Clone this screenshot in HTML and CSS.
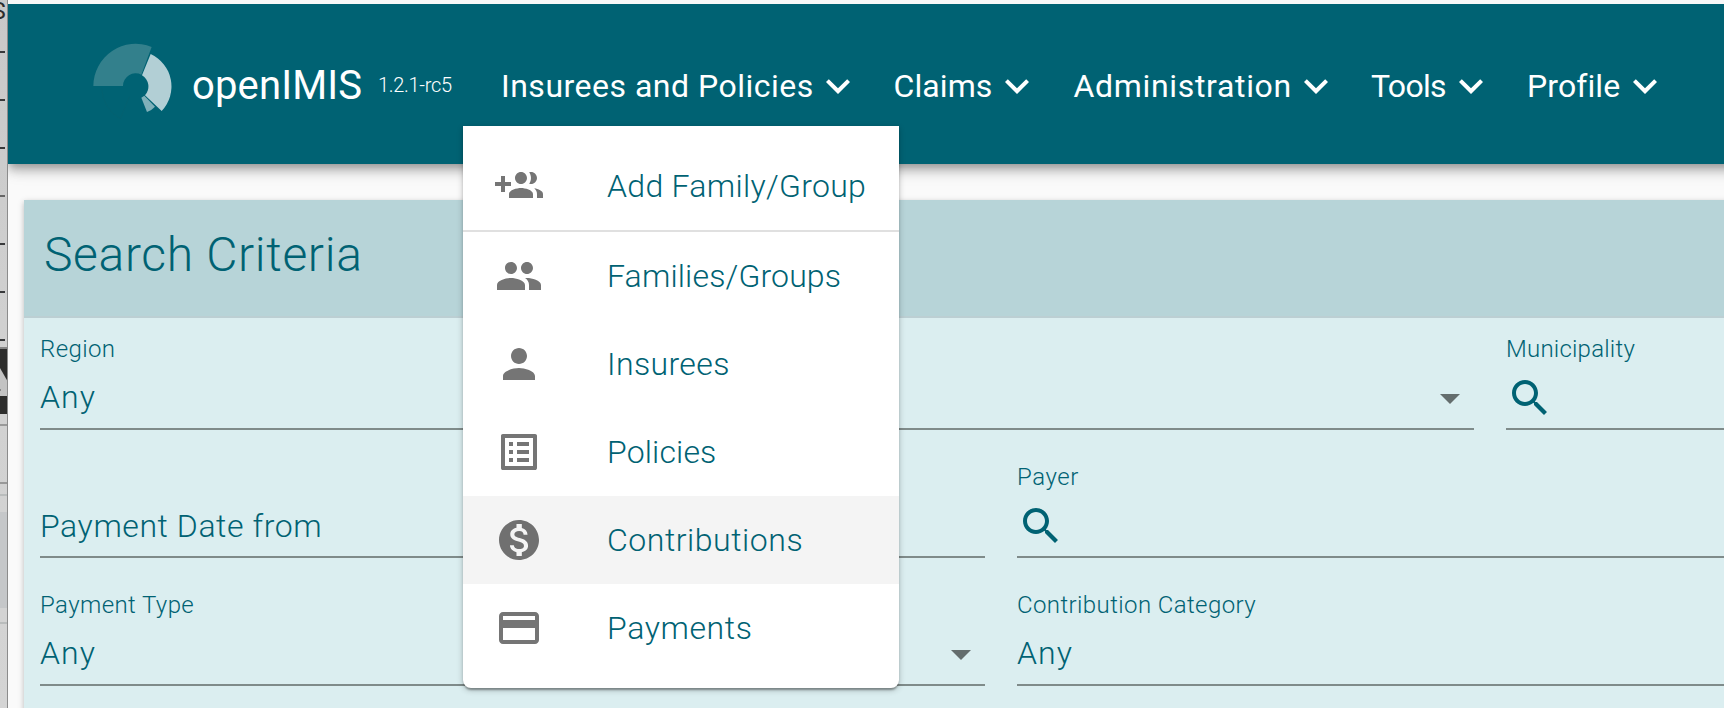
FILE: index.html
```html
<!DOCTYPE html>
<html lang="en">
<head>
<meta charset="utf-8">
<title>openIMIS</title>
<link rel="stylesheet" href="styles.css">
</head>
<body>
<svg class="icon-defs" aria-hidden="true">
  <symbol id="chevron" viewBox="0 0 24 24"><path d="M16.59 8.59L12 13.17 7.41 8.59 6 10l6 6 6-6z"/></symbol>
  <symbol id="drop" viewBox="0 0 24 24"><path d="M7 10l5 5 5-5z"/></symbol>
  <symbol id="search" viewBox="0 0 24 24"><path d="M15.5 14h-.79l-.28-.27C15.41 12.59 16 11.11 16 9.5 16 5.91 13.09 3 9.5 3S3 5.91 3 9.5 5.91 16 9.5 16c1.61 0 3.09-.59 4.23-1.57l.27.28v.79l5 4.99L20.49 19l-4.99-5zm-6 0C7.01 14 5 11.99 5 9.5S7.01 5 9.5 5 14 7.01 14 9.5 11.99 14 9.5 14z"/></symbol>
</svg>
<div class="screen">
  <aside class="backdrop">
    <svg width="8" height="708" viewBox="0 0 8 708">
      <path fill="#c5c7c9" d="M0 512h8v96H0z"/>
      <text x="-8.500" y="19" class="backdrop-letter">S</text>
      <path fill="#38393b" d="M0 51h5v2H0zM0 99h5v2H0zM0 147h5v2H0zM0 243h5v2H0zM0 291h5v2H0zM0 339h5v2H0z"/>
      <path fill="#666" d="M0 195h5v2H0z"/>
      <path fill="#858585" d="M0 347h8v2H0z"/>
      <path fill="#2d2d2c" d="M0 349h8v65H0z"/>
      <path fill="#c3c3c3" d="M0 368l8 14v14H0z"/>
      <path fill="#888" d="M0 389h1v2H0z"/>
      <path fill="#999" d="M0 424h8v2H0zM0 482h8v2H0z"/>
      <path fill="#b9bcbc" d="M0 494h8v2H0zM0 622h8v2H0z"/>
      <path fill="#8c8c8c" d="M7 0h1v708H7z"/>
    </svg>
  </aside>
  <div class="app">
    <header class="topbar">
      <svg class="logo" viewBox="270 120 256 256">
        <path fill="#33808c" d="M280 258A127 127 0 0 1 455 141L424 224A38 38 0 0 0 369 258z"/>
        <path fill="#b2cfd5" d="M452 162A107 107 0 0 1 485 333L435 286A39 39 0 0 0 426 226z"/>
        <path fill="#7fb0b9" d="M424 293L433 287 465 320A60 60 0 0 1 441 336z"/>
        <path fill="none" stroke="#0c5d6b" stroke-width="1" d="M305 266A107 107 0 0 0 361 356L388 290"/>
      </svg>
      <span class="brand">openIMIS</span>
      <span class="version">1.2.1-rc5</span>
      <nav class="nav">
        <a class="nav-item nav-insurees">Insurees and Policies<svg class="icon"><use href="#chevron"/></svg></a>
        <a class="nav-item nav-claims">Claims<svg class="icon"><use href="#chevron"/></svg></a>
        <a class="nav-item nav-admin">Administration<svg class="icon"><use href="#chevron"/></svg></a>
        <a class="nav-item nav-tools">Tools<svg class="icon"><use href="#chevron"/></svg></a>
        <a class="nav-item nav-profile">Profile<svg class="icon"><use href="#chevron"/></svg></a>
      </nav>
    </header>
    <main class="card">
      <h1 class="card-title">Search Criteria</h1>
      <div class="row row-wide">
        <div class="field">
          <span class="label">Region</span>
          <div class="value any">Any<svg class="icon drop"><use href="#drop"/></svg></div>
        </div>
        <div class="field">
          <span class="label municipality">Municipality</span>
          <div class="value"><svg class="icon find"><use href="#search"/></svg></div>
        </div>
      </div>
      <div class="row">
        <div class="field">
          <div class="value date">Payment Date from</div>
        </div>
        <div class="field">
          <span class="label payer">Payer</span>
          <div class="value"><svg class="icon find"><use href="#search"/></svg></div>
        </div>
      </div>
      <div class="row">
        <div class="field">
          <span class="label">Payment Type</span>
          <div class="value any">Any<svg class="icon drop"><use href="#drop"/></svg></div>
        </div>
        <div class="field">
          <span class="label category">Contribution Category</span>
          <div class="value any">Any</div>
        </div>
      </div>
    </main>
  </div>
</div>
<div class="menu">
  <a class="menu-item add"><svg class="icon" viewBox="0 0 24 24"><path d="M8 10H5V7H3v3H0v2h3v3h2v-3h3v-2zm10 1c1.66 0 2.99-1.34 2.99-3S19.66 5 18 5c-.32 0-.63.05-.91.14.57.81.9 1.79.9 2.86s-.34 2.04-.9 2.86c.28.09.59.14.91.14zm-5 0c1.66 0 2.99-1.34 2.99-3S14.66 5 13 5c-1.66 0-3 1.34-3 3s1.34 3 3 3zm6.620 2.160c.83.73 1.38 1.66 1.38 2.84v2h3v-2c0-1.540-2.370-2.490-4.380-2.840zM13 13c-2 0-6 1-6 3v2h12v-2c0-2-4-3-6-3z"/></svg>Add Family/Group</a>
  <hr class="divider">
  <a class="menu-item families"><svg class="icon" viewBox="0 0 24 24"><path d="M16 11c1.66 0 2.99-1.34 2.99-3S17.66 5 16 5c-1.66 0-3 1.34-3 3s1.34 3 3 3zm-8 0c1.66 0 2.99-1.34 2.99-3S9.66 5 8 5C6.34 5 5 6.34 5 8s1.34 3 3 3zm0 2c-2.33 0-7 1.17-7 3.5V19h14v-2.500c0-2.330-4.670-3.500-7-3.500zm8 0c-.29 0-.62.02-.97.05 1.16.84 1.97 1.97 1.97 3.45V19h6v-2.500c0-2.330-4.670-3.500-7-3.500z"/></svg>Families/Groups</a>
  <a class="menu-item insurees"><svg class="icon" viewBox="0 0 24 24"><path d="M12 12c2.210 0 4-1.790 4-4s-1.790-4-4-4-4 1.790-4 4 1.790 4 4 4zm0 2c-2.670 0-8 1.340-8 4v2h16v-2c0-2.660-5.330-4-8-4z"/></svg>Insurees</a>
  <a class="menu-item policies"><svg class="icon" viewBox="0 0 24 24"><path d="M19 5v14H5V5h14m1.100-2H3.900c-.5 0-.9.4-.9.9v16.200c0 .4.4.9.9.9h16.200c.4 0 .9-.5.9-.9V3.900c0-.5-.5-.9-.9-.9zM11 7h6v2h-6V7zm0 4h6v2h-6v-2zm0 4h6v2h-6v-2zM7 7h2v2H7V7zm0 4h2v2H7v-2zm0 4h2v2H7v-2z"/></svg>Policies</a>
  <a class="menu-item contributions active"><svg class="icon" viewBox="0 0 24 24"><path d="M12 2C6.480 2 2 6.480 2 12s4.480 10 10 10 10-4.480 10-10S17.520 2 12 2zm1.410 16.090V20h-2.670v-1.930c-1.710-.36-3.160-1.460-3.270-3.400h1.960c.1 1.050.82 1.870 2.650 1.870 1.960 0 2.400-.98 2.400-1.590 0-.83-.44-1.610-2.670-2.140-2.480-.6-4.180-1.620-4.180-3.670 0-1.720 1.390-2.840 3.110-3.210V4h2.670v1.950c1.860.45 2.790 1.860 2.850 3.390H14.300c-.05-1.110-.64-1.870-2.220-1.870-1.500 0-2.400.68-2.400 1.640 0 .84.65 1.390 2.670 1.910s4.180 1.390 4.180 3.910c-.01 1.830-1.380 2.830-3.120 3.160z"/></svg>Contributions</a>
  <a class="menu-item payments"><svg class="icon" viewBox="0 0 24 24"><path d="M20 4H4c-1.110 0-1.990.89-1.990 2L2 18c0 1.110.89 2 2 2h16c1.110 0 2-.89 2-2V6c0-1.110-.89-2-2-2zm0 14H4v-6h16v6zm0-10H4V6h16v2z"/></svg>Payments</a>
</div>
</body>
</html>
```
FILE: styles.css
```css
* { box-sizing: border-box; }
body {
  margin: 0;
  width: 1724px;
  height: 708px;
  overflow: hidden;
  background: #fafafa;
  color: #006273;
  font-family: Roboto, "Liberation Sans", sans-serif;
  font-size: 32px;
  font-weight: 300;
}
.icon-defs { display: none; }
.icon { width: 48px; height: 48px; flex: none; fill: currentColor; }

.screen { display: flex; height: 708px; overflow: hidden; }
.backdrop {
  flex: none;
  width: 8px;
  background: linear-gradient(#c8c8c8, #d0d0d0 45%, #d4d4d4);
}
.backdrop svg { display: block; }
.backdrop-letter { font-size: 24px; font-weight: 400; fill: #2d2d2d; }
.app { flex: 1; min-width: 0; overflow: hidden; }

/* Top bar */
.topbar {
  position: relative;
  display: flex;
  align-items: center;
  height: 164px;
  margin-right: -40px;
  padding-left: 82px;
  border-top: 4px solid #e0e0e0;
  border-image: linear-gradient(#f8f8f8 50%, #dedede 50%) 4;
  background: #006273;
  background-clip: padding-box;
  color: #fff;
  white-space: nowrap;
  box-shadow: 0 4px 8px -2px rgba(0,0,0,.24), 0 8px 10px rgba(0,0,0,.16), 0 2px 20px rgba(0,0,0,.14);
}
.logo { width: 85.330px; height: 85.330px; flex: none; margin-top: -3px; }
.brand { width: 186px; margin-left: 16.670px; padding-top: 2px; font-size: 40px; font-weight: 400; letter-spacing: .15px; }
.version { width: 123px; padding-top: 1px; font-size: 20px; letter-spacing: -.3px; }
.nav { display: flex; gap: 32px; padding-top: 4px; font-weight: 400; }
.nav-item { display: flex; align-items: center; justify-content: space-between; }
.nav-insurees { width: 361.500px; margin-right: -1px; letter-spacing: .5px; }
.nav-claims { width: 148px; letter-spacing: .1px; }
.nav-admin { width: 265.500px; letter-spacing: .67px; }
.nav-tools { width: 124px; letter-spacing: -.7px; }
.nav-profile { width: 142px; letter-spacing: .1px; }

/* Search form */
.card {
  width: 1900px;
  height: 600px;
  margin: 36px 0 0 16px;
  background: #dbeef0;
  box-shadow: 0 2px 6px rgba(0,0,0,.26);
}
.card-title {
  height: 118px;
  margin: 0;
  padding-left: 20px;
  border-bottom: 2px solid #bccfd3;
  background: #b7d4d8;
  font-size: 48px;
  font-weight: 300;
  line-height: 109px;
  letter-spacing: .66px;
}
.row {
  display: grid;
  grid-template-columns: 945px 1fr;
  gap: 32px;
  height: 128px;
  padding: 16px;
}
.row-wide { grid-template-columns: 1434px 1fr; }
.field { display: flex; flex-direction: column; justify-content: flex-end; }
.label { font-size: 24px; line-height: 30px; letter-spacing: .4px; }
.municipality { letter-spacing: .22px; }
.payer { letter-spacing: .55px; }
.category { letter-spacing: .4px; }
.value {
  display: flex;
  justify-content: space-between;
  height: 66px;
  border-bottom: 2px solid #7f8b8a;
  line-height: 66px;
  letter-spacing: .57px;
}
.date { line-height: 68px; }
.any { letter-spacing: 1.100px; }
.drop { align-self: flex-end; margin-bottom: 6px; fill: #646d6d; }
.find { align-self: flex-end; margin-bottom: 6px; }

/* Dropdown over the form */
.menu {
  position: absolute;
  left: 463px;
  top: 126px;
  width: 436px;
  height: 562px;
  padding: 16px 0;
  border-radius: 0 0 8px 8px;
  background: #fff;
  box-shadow: 0 4px 2px -2px rgba(0,0,0,.2), 0 2px 2px rgba(0,0,0,.16), 0 2px 6px rgba(0,0,0,.24);
}
.menu-item {
  display: flex;
  align-items: center;
  gap: 64px;
  height: 88px;
  padding-left: 32px;
  white-space: nowrap;
}
.menu-item .icon { fill: #757575; }
.active { background: #f4f4f4; }
.active .icon { fill: #707070; }
.divider { height: 2px; margin: 0; border: 0; background: #e0e0e0; }
.add { letter-spacing: .3px; }
.families { letter-spacing: .15px; }
.insurees { letter-spacing: .38px; }
.policies { letter-spacing: .15px; }
.contributions { letter-spacing: .54px; }
.payments { letter-spacing: .6px; }
```
